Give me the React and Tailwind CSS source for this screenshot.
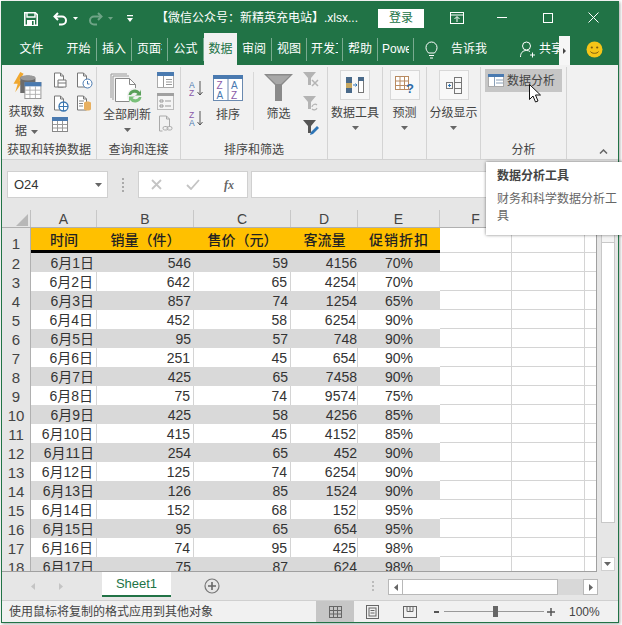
import React from "react";

const rows = [
  ["6月1日",546,59,4156,"70%"],["6月2日",642,65,4254,"70%"],["6月3日",857,74,1254,"65%"],["6月4日",452,58,6254,"90%"],
  ["6月5日",95,57,748,"90%"],["6月6日",251,45,654,"90%"],["6月7日",425,65,7458,"90%"],["6月8日",75,74,9574,"75%"],
  ["6月9日",425,58,4256,"85%"],["6月10日",415,45,4152,"85%"],["6月11日",254,65,452,"90%"],["6月12日",125,74,6254,"90%"],
  ["6月13日",126,85,1524,"90%"],["6月14日",152,68,152,"95%"],["6月15日",95,65,654,"95%"],["6月16日",74,95,425,"98%"],["6月17日",75,87,624,"98%"],
];

const tabs = [
  ["开始",35,0],["插入",34,0],["页面布局",35,25],["公式",35,0],["数据",33,0,true],["审阅",34,0],["视图",34,0],["开发工具",35,27],["帮助",34,0],["Power Pivot",35,27],
];

function Caret({ className = "" }) {
  return <svg width="7" height="4" viewBox="0 0 7 4" className={className}><path d="M0 0h7L3.5 4z" fill="#666" /></svg>;
}

function Doc({ children, c = "#777" }) {
  return (
    <svg width="17" height="17" viewBox="0 0 17 17" fill="none">
      <path d="M1.5 1h6l3 3v11h-9z" fill="#fff" stroke={c} />
      <path d="M7.5 1v3h3" stroke={c} />
      {children}
    </svg>
  );
}

function MiniTable({ w = 16, h = 15, c = "#4a7ab0" }) {
  return (
    <svg width={w} height={h} viewBox="0 0 16 15">
      <rect x=".5" y=".5" width="15" height="14" fill="#fff" stroke="#888" />
      <rect x="0" y="0" width="16" height="4" fill={c} />
      <path d="M5.5 4v10M10.5 4v10M1 7.5h14M1 11h14" stroke="#999" />
    </svg>
  );
}

function Funnel({ w = 16, h = 15, c = "#a8a8a8", children }) {
  return (
    <svg width={w} height={h} viewBox="0 0 16 15">
      <path d="M0 0h13L8 6v7H5V6z" fill={c} />
      {children}
    </svg>
  );
}

function ToolBox({ children }) {
  return <div className="w-[30px] h-[30px] bg-[#f8f8f8] border border-[#d8d8d8] flex items-center justify-center">{children}</div>;
}

function Group({ width, label, children, noBorder }) {
  return (
    <div className={`h-full flex flex-col shrink-0 ${noBorder ? "" : "border-r border-[#d4d4d4]"}`} style={{ width }}>
      <div className="h-[74px] flex">{children}</div>
      <div className="h-[17px] mt-[1px] leading-[17px] text-center text-[12px] text-[#444] whitespace-nowrap">{label}</div>
    </div>
  );
}

function Cell({ w, children, cls = "" }) {
  return <div className={`h-full shrink-0 leading-[21px] px-[3px] ${cls}`} style={{ width: w }}>{children}</div>;
}

const cols = [["A",66],["B",97],["C",97],["D",67],["E",82],["F",72],["G",73],["",12]];

export default function App() {
  return (
    <div className="w-[622px] h-[625px] bg-white relative overflow-hidden font-['Liberation_Sans','Noto_Sans_CJK_SC',sans-serif]">
      <div className="absolute left-[1px] top-[1px] w-[618px] h-[622px] border border-[#217346] shadow-[1px_1px_3px_rgba(0,0,0,0.35)] flex flex-col bg-[#f1f1f1]">
        {/* title bar */}
        <div className="h-[31px] shrink-0 bg-[#217346] flex items-center text-white">
          <svg width="14" height="14" viewBox="0 0 14 14" className="ml-[22px] mt-[2px]" fill="none">
            <path d="M.8.8h10.5l1.900 1.900v10.500H.8z" stroke="#fff" strokeWidth="1.6" />
            <path d="M3 1v4h8V1" stroke="#fff" strokeWidth="1.4" />
            <rect x="3" y="8" width="8" height="5" fill="#fff" />
            <rect x="8" y="9" width="1.6" height="4" fill="#217346" />
          </svg>
          <svg width="15" height="14" viewBox="0 0 15 14" className="ml-[15px] mt-[2px]" fill="none">
            <path d="M5 1 1.5 4.5 5 8" stroke="#fff" strokeWidth="2" />
            <path d="M2 4.5h7a4 4 0 0 1 0 8H6" stroke="#fff" strokeWidth="2" />
          </svg>
          <svg width="5" height="3" viewBox="0 0 5 3" className="ml-[5px] mt-[2px]"><path d="M0 0h5L2.500 3z" fill="#fff" /></svg>
          <svg width="15" height="14" viewBox="0 0 15 14" className="ml-[10px] mt-[2px] opacity-35" fill="none">
            <path d="M10 1l3.500 3.500L10 8" stroke="#fff" strokeWidth="2" />
            <path d="M13 4.500H6a4 4 0 0 0 0 8h3" stroke="#fff" strokeWidth="2" />
          </svg>
          <svg width="5" height="3" viewBox="0 0 5 3" className="ml-[5px] mt-[2px] opacity-35"><path d="M0 0h5L2.500 3z" fill="#fff" /></svg>
          <svg width="6" height="7" viewBox="0 0 6 7" className="ml-[14px] mt-[2px]"><path d="M0 0h6v1.200H0zM0 3h6L3 7z" fill="#fff" /></svg>
          <div className="ml-[23px] mt-[1px] w-[202px] text-[12px] leading-[16px] whitespace-nowrap">【微信公众号：新精英充电站】.xlsx...</div>
          <div className="ml-[20px] w-[46px] h-[19px] mt-[1px] bg-white text-[#217346] text-[12px] leading-[19px] text-center">登录</div>
          <svg width="14" height="12" viewBox="0 0 14 12" className="ml-[26px]" fill="none" stroke="#fff">
            <rect x=".5" y=".5" width="13" height="11" /><path d="M1 3h12M7 10V5M4.500 7 7 4.500 9.500 7" />
          </svg>
          <div className="ml-[33px] w-[10px] h-[1px] bg-white" />
          <div className="ml-[36px] w-[10px] h-[10px] border border-white" />
          <svg width="11" height="11" viewBox="0 0 11 11" className="ml-[35px]" stroke="#fff"><path d="M.5.500l10 10M10.500.500l-10 10" /></svg>
        </div>
        {/* tabs */}
        <div className="h-[32px] shrink-0 bg-[#217346] flex items-end text-white text-[12px]">
          <div className="w-[59px] h-[32px] leading-[32px] text-center">文件</div>
          {tabs.map(([t, w, clip, active], i) => (
            <div key={i} className="h-[32px] flex items-center shrink-0">
              <div className={`h-[32px] flex items-center justify-center shrink-0 ${active ? "bg-[#f1f1f1] text-[#217346]" : ""}`} style={{ width: w }}>
                <span className="block overflow-hidden whitespace-nowrap leading-[16px]" style={clip ? { width: clip } : undefined}>{t}</span>
              </div>
              {!active && <div className="w-[1px] h-[23px] bg-white/40" />}
            </div>
          ))}
          <svg width="13" height="18" viewBox="0 0 13 18" className="ml-[11px] mb-[6px]" fill="none" stroke="#fff">
            <path d="M3.500 12C2 10 1 9 1 6.500a5.500 5.500 0 0 1 11 0C12 9 11 10 9.500 12zM4 14.500h5M5 17h3" />
          </svg>
          <div className="ml-[13px] h-[32px] leading-[32px]">告诉我</div>
          <svg width="16" height="17" viewBox="0 0 16 17" className="ml-[33px] mb-[7px]" fill="none" stroke="#fff">
            <circle cx="6.500" cy="5" r="4" /><path d="M.5 16c0-4 2-6.500 6-6.500 1.500 0 2.500.3 3.500 1M10 14h5M12.500 11.500v5" />
          </svg>
          <div className="ml-[3px] h-[32px] w-[20px] overflow-hidden whitespace-nowrap leading-[32px]">共享</div>
          <div className="w-[11px] h-[29px] bg-[#f6f6f6] flex items-center justify-center">
            <svg width="3" height="6" viewBox="0 0 3 6"><path d="M0 0l3 3-3 3z" fill="#444" /></svg>
          </div>
          <svg width="17" height="17" viewBox="0 0 17 17" className="ml-[16px] mb-[7px]">
            <circle cx="8.500" cy="8.500" r="8" fill="#f5c518" />
            <circle cx="5.800" cy="6.500" r="1.100" fill="#7a5a10" /><circle cx="11.200" cy="6.500" r="1.100" fill="#7a5a10" />
            <path d="M4.500 10.500c1 2.400 7 2.400 8 0" stroke="#7a5a10" fill="none" />
          </svg>
        </div>
        {/* ribbon */}
        <div className="h-[95px] shrink-0 bg-[#f1f1f1] border-b border-[#d2d2d2] flex relative pt-[2px]">
          <Group width={95} label="获取和转换数据">
            <div className="w-[49px] flex flex-col items-center pt-[5px] text-[12px] text-[#444] leading-[19px]">
              <svg width="34" height="32" viewBox="0 0 34 32">
                <path d="M9 0 1 14h5L3 24l10-14H8l5-8z" fill="#f0a830" />
                <path d="M9 7c0-4 18-4 18 0v18H9z" fill="#6c6c6c" />
                <ellipse cx="18" cy="7" rx="9" ry="3" fill="#9a9a9a" />
                <rect x="14.500" y="12.500" width="19" height="19" fill="#fff" stroke="#8a8a8a" />
                <rect x="14" y="12" width="20" height="5" fill="#4a7ab0" />
                <path d="M20.500 17v14M27 17v14M15 21.500h18M15 26.500h18" stroke="#aaa" />
              </svg>
              <div className="mt-[4px] text-center w-[38px]">获取数</div>
              <div className="flex items-center gap-[4px]">据<Caret /></div>
            </div>
            <div className="flex flex-col pt-[5px] gap-[6px] ml-[2px]">
              <div className="flex gap-[6px]">
                <Doc><path d="M5 8h8v7H5z" fill="#fff" stroke="#777" /><path d="M5 11h8" stroke="#777" /></Doc>
                <Doc><circle cx="11.500" cy="11.500" r="4.500" fill="#fff" stroke="#4a7ab0" /><path d="M11.500 9v3h2" stroke="#4a7ab0" /></Doc>
              </div>
              <div className="flex gap-[6px]">
                <Doc><circle cx="10.500" cy="11.500" r="4.500" fill="#fff" stroke="#3a76b0" strokeWidth="1.300" /><path d="M6 11.500h9M10.500 7v9" stroke="#3a76b0" /></Doc>
                <Doc><path d="M3 6h5M3 8.500h4M3 11h4" stroke="#888" /><path d="M8 8c0-2 7-2 7 0v6c0 2-7 2-7 0z" fill="#e8b060" /></Doc>
              </div>
              <div className="-ml-[1px] -mt-[1px]"><MiniTable /></div>
            </div>
          </Group>
          <Group width={84} label="查询和连接">
            <div className="w-[60px] flex flex-col items-center pt-[6px] text-[12px] text-[#444] leading-[19px]">
              <svg width="34" height="32" viewBox="0 0 34 32" fill="none">
                <path d="M1 1h16M1 1v24" stroke="#999" />
                <path d="M3 3h16M3 3v24" stroke="#999" />
                <path d="M5.500 5.500h14l6 6v17h-20z" fill="#fff" stroke="#888" />
                <path d="M19.500 5.500v6h6" stroke="#888" />
                <circle cx="25" cy="23" r="8" fill="#f1f1f1" />
                <path d="M18.500 22a6.500 6.500 0 0 1 11.500-3l1-2.500v6h-6l2.500-1.500a4 4 0 0 0-6.500 1z" fill="#5aa05a" />
                <path d="M31.500 24a6.500 6.500 0 0 1-11.500 3l-1 2.500v-6h6l-2.500 1.500a4 4 0 0 0 6.500-1z" fill="#7ac07a" />
              </svg>
              <div className="mt-[1px]">全部刷新</div>
              <Caret className="mt-[3px]" />
            </div>
            <div className="flex flex-col pt-[5px] gap-[5px]">
              <svg width="17" height="16" viewBox="0 0 17 16"><rect x=".5" y=".5" width="16" height="15" fill="#fff" stroke="#aaa" /><rect width="17" height="4" fill="#4a7ab0" /><path d="M6.500 4v11M9 7.500h6M9 10h6M9 12.500h6" stroke="#999" /></svg>
              <svg width="17" height="17" viewBox="0 0 17 17"><rect x=".5" y=".5" width="16" height="16" fill="#f4f4f4" stroke="#bbb" /><rect width="17" height="3" fill="#a0a0a0" /><path d="M3 7h3v2H3zM3 12h3v2H3z" fill="none" stroke="#999" /><path d="M8 8h6M8 13h6" stroke="#999" /></svg>
              <svg width="17" height="18" viewBox="0 0 17 18" fill="none"><path d="M2.500 1h7l3 3v7M2.500 1v15h3" stroke="#aaa" /><path d="M9.500 1v3h3" stroke="#aaa" /><rect x="6" y="11.500" width="5" height="3.500" rx="1.700" stroke="#aaa" /><rect x="10" y="11.500" width="5" height="3.500" rx="1.700" stroke="#aaa" /></svg>
            </div>
          </Group>
          <Group width={147} label="排序和筛选">
            <div className="flex flex-col pt-[13px] gap-[14px] pl-[8px] w-[31px]">
              <svg width="15" height="16" viewBox="0 0 15 16"><text x="0" y="7.500" fontSize="8.500" fill="#4a7ab0" fontFamily="Liberation Sans">A</text><text x="0" y="15.500" fontSize="8.500" fill="#8a5aa8" fontFamily="Liberation Sans">Z</text><path d="M11 1v14M8.500 12l2.500 3 2.500-3" stroke="#555" fill="none" /></svg>
              <svg width="15" height="16" viewBox="0 0 15 16"><text x="0" y="7.500" fontSize="8.500" fill="#8a5aa8" fontFamily="Liberation Sans">Z</text><text x="0" y="15.500" fontSize="8.500" fill="#4a7ab0" fontFamily="Liberation Sans">A</text><path d="M11 1v14M8.500 12l2.500 3 2.500-3" stroke="#555" fill="none" /></svg>
            </div>
            <div className="w-[32px] flex flex-col items-center pt-[8px] text-[12px] text-[#444] leading-[19px]">
              <svg width="30" height="26" viewBox="0 0 30 26" className="shrink-0">
                <rect x=".5" y=".5" width="29" height="25" fill="#fff" stroke="#6a8ab0" />
                <rect width="30" height="4" fill="#4a7ab0" /><path d="M15 4v22" stroke="#6a8ab0" />
                <text x="3.500" y="14" fontSize="10" fill="#8a5aa8" fontFamily="Liberation Sans">Z</text><text x="18" y="14" fontSize="10" fill="#4a7ab0" fontFamily="Liberation Sans">A</text>
                <text x="3.500" y="24" fontSize="10" fill="#4a7ab0" fontFamily="Liberation Sans">A</text><text x="18" y="24" fontSize="10" fill="#8a5aa8" fontFamily="Liberation Sans">Z</text>
              </svg>
              <div className="mt-[5px]">排序</div>
            </div>
            <div className="w-[1px] h-[58px] mt-[5px] ml-[9px] bg-[#d8d8d8]" />
            <div className="w-[49px] flex flex-col items-center pt-[7px] text-[12px] text-[#444] leading-[19px]">
              <svg width="29" height="27" viewBox="0 0 29 27"><path d="M0 0h29L18 11v16h-7V11z" fill="#8a8a8a" /><path d="M3 1.500h23L17 10H12z" fill="#a8a8a8" /></svg>
              <div className="mt-[4px]">筛选</div>
            </div>
            <div className="flex flex-col pt-[5px] gap-[9px]">
              <Funnel c="#b4b4b4"><path d="M9 8l6 6M15 8l-6 6" stroke="#b4b4b4" strokeWidth="1.500" /></Funnel>
              <Funnel c="#b4b4b4"><path d="M9 11a3 3 0 0 1 5-2M14 12a3 3 0 0 1-5 1" stroke="#b4b4b4" strokeWidth="1.200" fill="none" /></Funnel>
              <Funnel c="#555"><path d="M7 15l1-3 6-6 2 2-6 6z" fill="#2e75b6" /></Funnel>
            </div>
          </Group>
          <Group width={55}>
            <div className="w-[54px] flex flex-col items-center pt-[3px] text-[12px] text-[#444] leading-[19px]">
              <ToolBox>
                <svg width="18" height="18" viewBox="0 0 18 18"><rect x="0" y="1" width="6" height="16" fill="#4a6a8a" /><rect x="0" y="7" width="6" height="5" fill="#c8a860" /><rect x="12.500" y="1.500" width="5" height="15" fill="#fff" stroke="#777" /><rect x="12" y="1" width="6" height="4" fill="#4a6a8a" /><path d="M7 9h4M9.500 7.500 11 9l-1.500 1.500" stroke="#2e75b6" fill="none" /></svg>
              </ToolBox>
              <div className="mt-[4px] whitespace-nowrap">数据工具</div>
              <Caret className="mt-[3px]" />
            </div>
          </Group>
          <Group width={44}>
            <div className="w-[43px] flex flex-col items-center pt-[3px] text-[12px] text-[#444] leading-[19px]">
              <ToolBox>
                <svg width="20" height="18" viewBox="0 0 20 18"><rect x=".5" y=".5" width="13" height="13" fill="#fff" stroke="#b88a60" /><path d="M5 1v12M9.500 1v12M1 5h12M1 9.500h12" stroke="#b88a60" /><text x="11" y="17" fontSize="13" fontWeight="700" fill="#2e6ca8" fontFamily="Liberation Sans">?</text></svg>
              </ToolBox>
              <div className="mt-[4px]">预测</div>
              <Caret className="mt-[3px]" />
            </div>
          </Group>
          <Group width={54}>
            <div className="w-[53px] flex flex-col items-center pt-[3px] text-[12px] text-[#444] leading-[19px]">
              <ToolBox>
                <svg width="17" height="17" viewBox="0 0 17 17" fill="none"><rect x="1.500" y="5.500" width="6" height="6" stroke="#777" /><path d="M3 8.500h3M4.500 7v3" stroke="#2e75b6" /><rect x="9.500" y=".5" width="7" height="16" stroke="#777" /><path d="M9.500 5.500h7M9.500 11.500h7" stroke="#777" /></svg>
              </ToolBox>
              <div className="mt-[4px] whitespace-nowrap">分级显示</div>
              <Caret className="mt-[3px]" />
            </div>
          </Group>
          <Group width={86} label="分析">
            <div className="ml-[4px] mt-[2px] w-[77px] h-[23px] bg-[#c6c6c6] flex items-center text-[12px] text-[#444]">
              <svg width="16" height="13" viewBox="0 0 16 13" className="ml-[3px]"><rect x=".5" y=".5" width="15" height="12" fill="#fff" stroke="#aaa" /><rect width="16" height="3" fill="#4a7ab0" /><path d="M6.500 3v9M8 6h7M8 9h7" stroke="#8aa0b8" /></svg>
              <span className="ml-[3px] whitespace-nowrap leading-[16px]">数据分析</span>
            </div>
          </Group>
          <svg width="9" height="5" viewBox="0 0 9 5" className="absolute left-[597px] top-[84px]" fill="none"><path d="M1 4.500l3.500-3.500L8 4.500" stroke="#666" strokeWidth="1.500" /></svg>
        </div>
        {/* formula bar */}
        <div className="h-[50px] shrink-0 bg-[#e6e6e6] flex items-start pt-[11px]">
          <div className="ml-[5px] w-[101px] h-[27px] bg-white border border-[#d0d0d0] flex items-center justify-between pl-[6px] pr-[5px] text-[13px] text-[#333]">
            <span>O24</span><Caret />
          </div>
          <div className="ml-[14px] mt-[7px] flex flex-col gap-[2px]">
            <div className="w-[2px] h-[2px] bg-[#aaa]" /><div className="w-[2px] h-[2px] bg-[#aaa]" /><div className="w-[2px] h-[2px] bg-[#aaa]" /><div className="w-[2px] h-[2px] bg-[#aaa]" />
          </div>
          <div className="ml-[14px] w-[110px] h-[27px] bg-white border border-[#d0d0d0] flex items-center pl-[12px]">
            <svg width="11" height="11" viewBox="0 0 11 11" stroke="#c4c4c4" strokeWidth="1.800"><path d="M1 1l9 9M10 1l-9 9" /></svg>
            <svg width="14" height="11" viewBox="0 0 14 11" className="ml-[24px]" fill="none" stroke="#c4c4c4" strokeWidth="1.800"><path d="M1 6l4 4 8-9" /></svg>
            <span className="ml-[24px] font-['Liberation_Serif',serif] italic font-bold text-[12px] text-[#666] leading-none">fx</span>
          </div>
          <div className="ml-[3px] w-[360px] h-[27px] bg-white border border-[#d0d0d0]" />
        </div>
        {/* grid + scrollbar */}
        <div className="h-[362px] shrink-0 flex bg-[#e6e6e6]">
          <div className="w-[595px] shrink-0 h-[362px] overflow-hidden bg-white border-r border-b border-[#a0a0a0]">
            {/* column headers */}
            <div className="h-[18px] flex bg-[#e6e6e6] border-b border-[#b0b0b0] text-[14px] text-[#444]">
              <div className="w-[29px] h-full border-r border-[#c0c0c0] relative shrink-0">
                <svg width="12" height="12" viewBox="0 0 12 12" className="absolute right-[2px] bottom-[1px]"><path d="M12 0v12H0z" fill="#b8b8b8" /></svg>
              </div>
              {cols.map(([c, w]) => (
                <div key={c || "h"} className="h-full shrink-0 border-r border-[#c8c8c8] text-center leading-[18px]" style={{ width: w }}>{c}</div>
              ))}
            </div>
            {/* row 1 */}
            <div className="h-[25px] flex">
              <div className="w-[29px] shrink-0 bg-[#e6e6e6] border-r border-[#b0b0b0] text-[15px] text-[#444] text-center pt-[6px] leading-[20px]">1</div>
              <div className="w-[409px] shrink-0 flex bg-[#ffc000] border-b-[3px] border-black text-[14px] font-medium text-[#222] text-center leading-[24px]">
                <div className="w-[66px]">时间</div>
                <div className="w-[97px]">销量（件）</div>
                <div className="w-[97px]">售价（元）</div>
                <div className="w-[67px]">客流量</div>
                <div className="w-[82px] tracking-[1px]">促销折扣</div>
              </div>
              <div className="w-[72px] shrink-0 border-r border-b border-[#d4d4d4]" />
              <div className="w-[73px] shrink-0 border-r border-b border-[#d4d4d4]" />
              <div className="w-[12px] shrink-0 border-b border-[#d4d4d4]" />
            </div>
            {rows.map((r, i) => {
              const gray = i % 2 === 0;
              const line = gray ? "" : "border-r border-[#d4d4d4]";
              return (
                <div key={i} className="h-[19px] flex text-[14px] text-[#333]">
                  <div className="w-[29px] shrink-0 bg-[#e6e6e6] border-r border-[#b0b0b0] text-[15px] text-[#444] text-center leading-[21px]">{i + 2}</div>
                  <div className={`w-[409px] shrink-0 flex ${gray ? "bg-[#d9d9d9]" : "bg-white"}`}>
                    <Cell w={66} cls={`text-right ${line}`}>{r[0]}</Cell>
                    <Cell w={97} cls={`text-right ${line}`}>{r[1]}</Cell>
                    <Cell w={97} cls={`text-right ${line}`}>{r[2]}</Cell>
                    <Cell w={67} cls={`text-right !px-[1px] ${line}`}>{r[3]}</Cell>
                    <Cell w={82} cls="text-center">{r[4]}</Cell>
                  </div>
                  <div className="w-[72px] shrink-0 border-r border-b border-[#d4d4d4]" />
                  <div className="w-[73px] shrink-0 border-r border-b border-[#d4d4d4]" />
                  <div className="w-[12px] shrink-0 border-b border-[#d4d4d4]" />
                </div>
              );
            })}
          </div>
          <div className="flex-1 flex flex-col items-center pl-[2px] pr-[2px]">
            <div className="w-[14px] h-[14px] mt-[19px] bg-[#f4f4f4] border border-[#c8c8c8]" />
            <div className="w-[14px] h-[280px] bg-white border-x border-b border-[#c8c8c8]" />
            <div className="flex-1" />
            <div className="w-[14px] h-[14px] bg-white border border-[#d0d0d0] flex items-center justify-center mb-[1px]"><Caret /></div>
          </div>
        </div>
        {/* sheet tabs */}
        <div className="h-[28px] shrink-0 bg-[#e6e6e6] flex items-start">
          <svg width="4" height="7" viewBox="0 0 4 7" className="ml-[29px] mt-[11px]"><path d="M4 0v7L0 3.500z" fill="#c4c4c4" /></svg>
          <svg width="4" height="7" viewBox="0 0 4 7" className="ml-[24px] mt-[11px]"><path d="M0 0v7l4-3.500z" fill="#c4c4c4" /></svg>
          <div className="ml-[39px] w-[69px] h-[25px] bg-white border-b-[2px] border-[#217346] text-[#217346] text-[13px] text-center leading-[23px]">Sheet1</div>
          <svg width="16" height="16" viewBox="0 0 16 16" className="ml-[33px] mt-[6px]" fill="none"><circle cx="8" cy="8" r="7" stroke="#777" strokeWidth="1.200" /><path d="M4 8h8M8 4v8" stroke="#666" strokeWidth="1.600" /></svg>
          <div className="ml-[152px] mt-[9px] flex flex-col gap-[2px]">
            <div className="w-[2px] h-[2px] bg-[#bbb]" /><div className="w-[2px] h-[2px] bg-[#bbb]" /><div className="w-[2px] h-[2px] bg-[#bbb]" />
          </div>
          <div className="ml-[14px] mt-[7px] w-[210px] h-[16px] flex">
            <div className="w-[15px] h-full bg-white border border-[#b8b8b8] flex items-center justify-center"><svg width="4" height="7" viewBox="0 0 4 7"><path d="M4 0v7L0 3.500z" fill="#666" /></svg></div>
            <div className="w-[155px] h-full bg-white border-y border-r border-[#b8b8b8]" />
            <div className="w-[25px] h-full bg-[#d8d8d8]" />
            <div className="w-[15px] h-full bg-white border border-[#b8b8b8] flex items-center justify-center"><svg width="4" height="7" viewBox="0 0 4 7"><path d="M0 0v7l4-3.500z" fill="#666" /></svg></div>
          </div>
        </div>
        {/* status */}
        <div className="flex-1 bg-[#f1f1f1] border-t border-[#d0d0d0] flex items-center text-[12px] text-[#444]">
          <div className="ml-[7px] w-[307px] whitespace-nowrap leading-[16px]">使用鼠标将复制的格式应用到其他对象</div>
          <div className="w-[38px] h-full bg-[#c6c6c6] flex items-center justify-center">
            <svg width="13" height="12" viewBox="0 0 13 12" fill="none" stroke="#666"><rect x=".5" y=".5" width="12" height="11" /><path d="M4.500 1v10M8.500 1v10M1 4.500h11M1 8h11" /></svg>
          </div>
          <svg width="13" height="14" viewBox="0 0 13 14" className="ml-[12px]" fill="none" stroke="#666"><rect x=".5" y=".5" width="12" height="13" /><rect x="3" y="3" width="7" height="8" /><path d="M4.500 5.500h4M4.500 8h4" /></svg>
          <svg width="14" height="12" viewBox="0 0 14 12" className="ml-[24px]" fill="none" stroke="#666"><rect x=".5" y=".5" width="13" height="11" /><path d="M4 .5v5h6v-5M7 .5v5" /></svg>
          <div className="ml-[17px] w-[5px] h-[2px] bg-[#555]" />
          <div className="ml-[5px] w-[100px] h-[1px] bg-[#999] relative">
            <div className="absolute left-[49px] -top-[5px] w-[5px] h-[11px] bg-[#666]" />
          </div>
          <svg width="8" height="8" viewBox="0 0 8 8" className="ml-[3px]"><path d="M0 4h8M4 0v8" stroke="#555" strokeWidth="1.500" /></svg>
          <div className="ml-[14px] leading-[16px]">100%</div>
        </div>
      </div>
      {/* tooltip */}
      <div className="absolute left-[486px] top-[162px] w-[140px] h-[73px] bg-white shadow-[0_0_3px_rgba(0,0,0,0.5)] pl-[11px] pr-[4px] pt-[6px] text-[12px]">
        <div className="font-bold text-[#444] leading-[17px]">数据分析工具</div>
        <div className="mt-[6px] text-[#666] leading-[17px] w-[122px]">财务和科学数据分析工具</div>
      </div>
      {/* cursor */}
      <svg width="13" height="20" viewBox="0 0 13 20" className="absolute left-[529px] top-[84px]">
        <path d="M.5.500v15l3.500-3.500 2.500 6 2.500-1-2.500-6h5z" fill="#fff" stroke="#111" />
      </svg>
    </div>
  );
}
